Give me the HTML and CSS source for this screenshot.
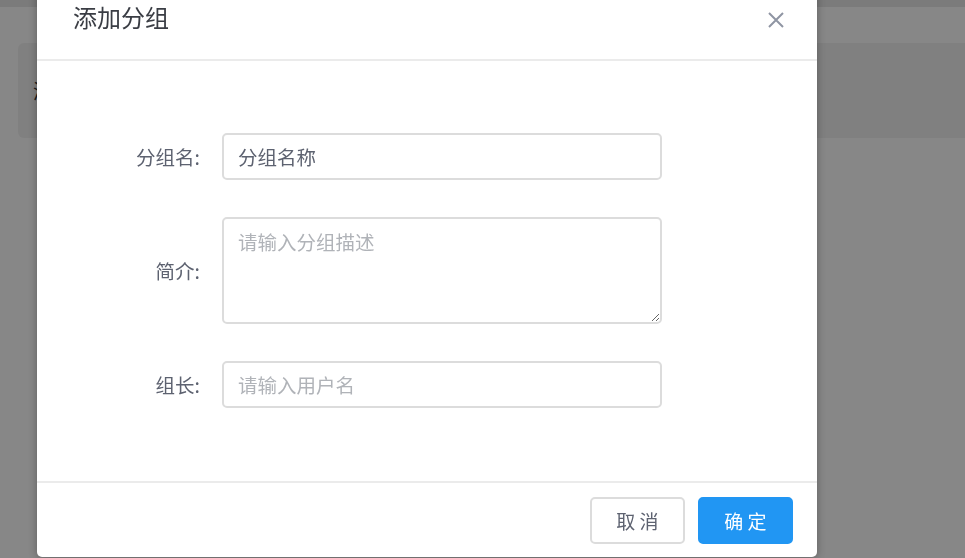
FILE: index.html
```html
<!DOCTYPE html>
<html lang="zh-CN">

<head>
  <meta charset="UTF-8">
  <meta name="viewport" content="width=device-width, initial-scale=1.0">
  <title>添加分组</title>
  <link rel="stylesheet" href="styles.css">
</head>

<body>
  <div class="topbar"></div>

  <div class="page">
    <div class="toolCard">
      <span class="toolText">添加分组</span>
    </div>
  </div>

  <div class="mask"></div>

  <div class="dialog">
    <div class="dialogHeader">
      <span class="dialogTitle">添加分组</span>
      <span class="closeBtn">
        <svg width="16" height="16" viewBox="0 0 16 16">
          <path d="M1 1 L15 15 M15 1 L1 15" stroke="#8f95a3" stroke-width="2" fill="none" />
        </svg>
      </span>
    </div>

    <div class="dialogBody">
      <div class="formItem">
        <label class="formLabel">分组名:</label>
        <input class="formInput" type="text" value="分组名称">
      </div>
      <div class="formItem">
        <label class="formLabel">简介:</label>
        <textarea class="formInput formTextarea" placeholder="请输入分组描述"></textarea>
      </div>
      <div class="formItem">
        <label class="formLabel">组长:</label>
        <input class="formInput" type="text" placeholder="请输入用户名">
      </div>
    </div>

    <div class="dialogFooter">
      <button class="btn btnPlain">取 消</button>
      <button class="btn btnPrimary">确 定</button>
    </div>
  </div>
</body>

</html>
```

FILE: styles.css
```css
body {
  font-family: 'Noto Sans CJK SC', 'Liberation Sans', sans-serif;
  background-color: #fff;
  margin: 0;
  padding: 0;
  overflow: hidden;
}

.topbar {
  height: 7px;
  background-color: #e8e8e8;
}

.page {
  padding: 36px 0 0 18px;
}

.toolCard {
  height: 95px;
  background-color: #f2f2f2;
  border-radius: 6px 0 0 6px;
  display: flex;
  align-items: center;
  padding-left: 15px;
}

.toolText {
  font-size: 20px;
  color: #303133;
}

.mask {
  position: fixed;
  left: 0;
  top: 0;
  right: 0;
  bottom: 0;
  background-color: rgba(0, 0, 0, 0.47);
}

.dialog {
  position: absolute;
  left: 37px;
  top: -20px;
  width: 780px;
  height: 577px;
  background-color: #fff;
  border-radius: 5px;
  box-shadow: 0 1px 8px rgba(0, 0, 0, 0.3);
  display: flex;
  flex-direction: column;
}

.dialogHeader {
  height: 81px;
  border-bottom: 2px solid #ebebeb;
  display: flex;
  align-items: flex-end;
  justify-content: space-between;
  padding: 0 33px 0 36px;
  box-sizing: border-box;
}

.dialogTitle {
  font-size: 24px;
  color: #3a3d44;
  line-height: 36px;
  margin-bottom: 24px;
}

.closeBtn {
  display: flex;
  margin-bottom: 31px;
}

.dialogBody {
  flex: 1;
  padding-top: 72px;
  display: flex;
  flex-direction: column;
  gap: 37px;
}

.formItem {
  display: flex;
  align-items: center;
}

.formLabel {
  width: 185px;
  box-sizing: border-box;
  padding-right: 22px;
  text-align: right;
  font-size: 19.5px;
  color: #5d6270;
}

.formInput {
  width: 440px;
  height: 47px;
  box-sizing: border-box;
  border: 2px solid #dcdcdc;
  border-radius: 5px;
  padding: 0 14px;
  font-family: 'Noto Sans CJK SC', 'Liberation Sans', sans-serif;
  font-size: 19.5px;
  color: #5d6270;
  outline: none;
}

.formInput::placeholder {
  color: #b0b3b8;
}

.formTextarea {
  height: 107px;
  padding: 8px 14px;
  line-height: 30px;
  resize: vertical;
}

.dialogFooter {
  height: 76px;
  border-top: 2px solid #ebebeb;
  box-sizing: border-box;
  display: flex;
  justify-content: flex-end;
  padding: 14px 24px 0 0;
  gap: 13px;
}

.btn {
  width: 95px;
  height: 47px;
  border-radius: 5px;
  font-family: 'Noto Sans CJK SC', 'Liberation Sans', sans-serif;
  font-size: 19px;
  cursor: pointer;
}

.btnPlain {
  background-color: #fff;
  border: 2px solid #dcdcdc;
  color: #5d6270;
}

.btnPrimary {
  background-color: #2196f3;
  border: 2px solid #2196f3;
  color: #fff;
}
```
